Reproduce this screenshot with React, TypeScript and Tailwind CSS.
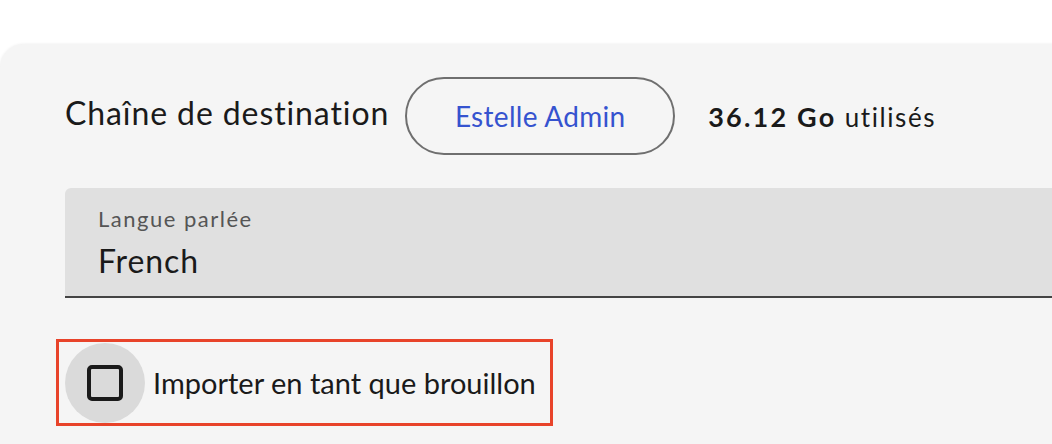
import React from "react";

export default function App() {
  return (
    <div className="w-[1052px] h-[444px] bg-white overflow-hidden" style={{ fontFamily: "Lato, 'Noto Sans', sans-serif" }}>
      <div className="mt-[44px] w-[1120px] h-[460px] bg-[#f5f5f5] rounded-tl-[24px] shadow-[0_0_3px_rgba(0,0,0,0.08)]">
        <div className="flex items-center pl-[65px] pt-[33px]">
          <span className="pb-[6px] text-[32px] leading-none tracking-[0.9px] text-[#1a1a1a]">Chaîne de destination</span>
          <div className="ml-[16px] flex h-[78px] w-[270px] items-center justify-center rounded-full border-2 border-[#6f6f6f]">
            <span className="text-[28px] leading-none tracking-[0.3px] text-[#3553cf]">Estelle Admin</span>
          </div>
          <span className="ml-[33px] text-[26px] leading-none tracking-[1.6px] text-[#1a1a1a]">
            <span className="text-[27px] font-bold tracking-[2.2px]">36.12 Go</span> utilisés
          </span>
        </div>
        <div className="ml-[65px] mt-[33px] h-[110px] rounded-t-[6px] border-b-2 border-[#444] bg-[#e0e0e0] pl-[33px] pt-[17px]">
          <div className="text-[22px] leading-[28px] tracking-[1.5px] text-[#555]">Langue parlée</div>
          <div className="mt-[9px] text-[32px] leading-[38px] tracking-[0.9px] text-[#1a1a1a]">French</div>
        </div>
        <div className="ml-[56px] mt-[41px] flex h-[87px] w-[497px] items-center overflow-hidden border-[3px] border-[#e8432a]">
          <div className="ml-[6px] flex h-[80px] w-[80px] shrink-0 items-center justify-center rounded-full bg-[#dadada]">
            <div className="h-[36px] w-[36px] rounded-[5px] border-[4px] border-[#1a1a1a]" />
          </div>
          <span className="ml-[8px] text-[29px] leading-none text-[#1a1a1a]">Importer en tant que brouillon</span>
        </div>
      </div>
    </div>
  );
}
